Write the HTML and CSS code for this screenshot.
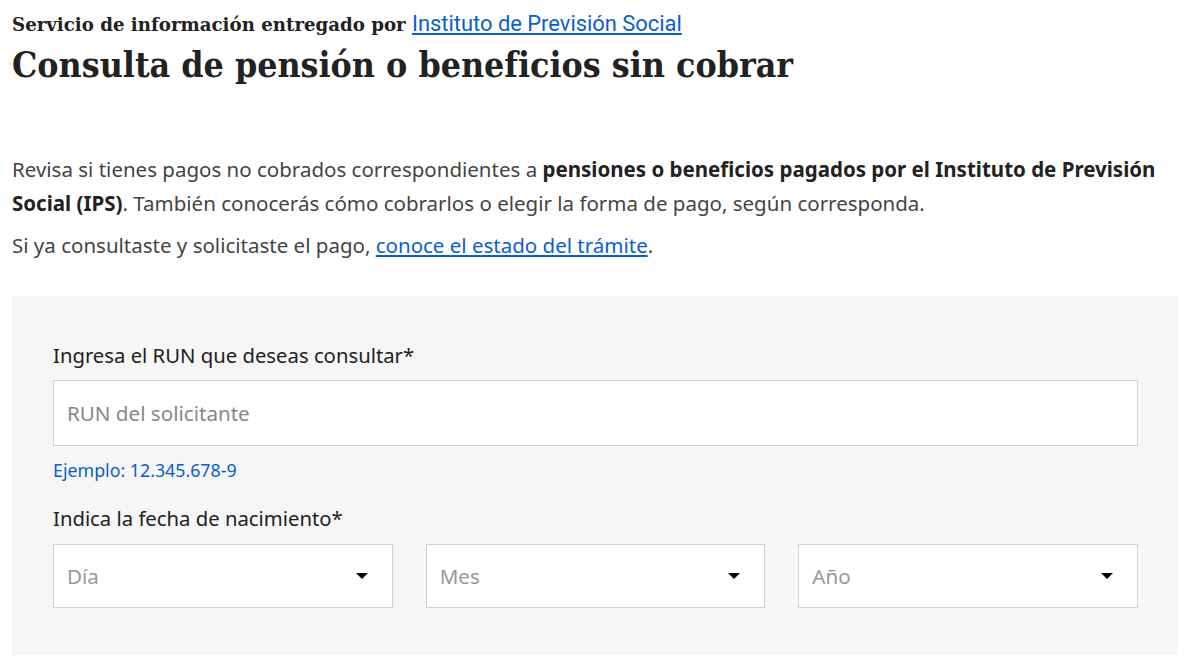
FILE: index.html
```html
<!doctype html>
<html lang="es">
<head>
	<meta charset="UTF-8">
	<title>Consulta de pensión o beneficios sin cobrar</title>
	<link rel="stylesheet" href="styles.css">
</head>
<body>
	<div class="page">
		<div class="header">
			<p class="provider">Servicio de información entregado por <a href="#">Instituto de Previsión Social</a></p>
			<h1 class="title">Consulta de pensión o beneficios sin cobrar</h1>
		</div>

		<div class="intro">
			<p>Revisa si tienes pagos no cobrados correspondientes a <strong>pensiones o beneficios pagados por el Instituto de Previsión Social (IPS)</strong>. También conocerás cómo cobrarlos o elegir la forma de pago, según corresponda.</p>
			<p>Si ya consultaste y solicitaste el pago, <a href="#">conoce el estado del trámite</a>.</p>
		</div>

		<form class="form_box">
			<div class="field">
				<label class="label" for="run">Ingresa el RUN que deseas consultar*</label>
				<input type="text" id="run" class="input" placeholder="RUN del solicitante">
				<span class="hint">Ejemplo: 12.345.678-9</span>
			</div>
			<div class="field">
				<span class="label date_label">Indica la fecha de nacimiento*</span>
				<div class="date_row">
					<div class="select">
						<span class="select_text">Día</span>
						<span class="caret"></span>
					</div>
					<div class="select">
						<span class="select_text">Mes</span>
						<span class="caret"></span>
					</div>
					<div class="select">
						<span class="select_text">Año</span>
						<span class="caret"></span>
					</div>
				</div>
			</div>
		</form>
	</div>
</body>
</html>
```

FILE: styles.css
```css
body{
	margin:0;
	background:#fff;
	font-family:"Noto Sans","Open Sans",sans-serif;
	color:#444;
}
.page{
	padding:0 12px;
}
.header{
	padding-top:12px;
}
.provider{
	margin:0;
	font-family:"DejaVu Serif",serif;
	font-weight:bold;
	font-size:18.2px;
	line-height:26px;
	color:#222;
}
.provider a{
	font-family:Roboto,sans-serif;
	font-weight:normal;
	font-size:21.9px;
	line-height:20px;
	color:#0b5fcc;
}
.title{
	margin:4px 0 0;
	font-family:"DejaVu Serif",serif;
	font-stretch:condensed;
	font-weight:bold;
	font-size:35.4px;
	line-height:46px;
	color:#222;
}
.intro{
	margin-top:64px;
	font-size:20.5px;
	line-height:34px;
}
.intro p{
	margin:0 0 8px;
}
.intro strong{
	color:#222;
}
.intro a{
	color:#0b5fcc;
}
.form_box{
	margin-top:34px;
	background:#f6f6f6;
	padding:46px 40px 47px 41px;
	width:1085px;
}
.field{
	display:flex;
	flex-direction:column;
}
.label{
	font-size:20.3px;
	line-height:26px;
	color:#222;
	margin-bottom:12px;
}
.date_label{
	margin-bottom:13px;
}
.input{
	height:66px;
	box-sizing:border-box;
	border:1px solid #d2d2d2;
	background:#fff;
	padding:0 13px;
	font-family:inherit;
	font-size:20.6px;
	color:#222;
}
.input::placeholder{
	color:#888;
}
.hint{
	margin-top:12px;
	font-size:17.8px;
	line-height:24px;
	color:#0b5fcc;
	margin-bottom:23px;
}
.date_row{
	display:flex;
	gap:33px;
}
.select{
	flex:1;
	height:64px;
	box-sizing:border-box;
	border:1px solid #d2d2d2;
	background:#fff;
	display:flex;
	align-items:center;
	justify-content:space-between;
	padding:0 24px 0 13px;
}
.select_text{
	font-size:20.6px;
	color:#999;
}
.caret{
	width:0;
	height:0;
	border-left:6px solid transparent;
	border-right:6px solid transparent;
	border-top:6px solid #000;
}
```
